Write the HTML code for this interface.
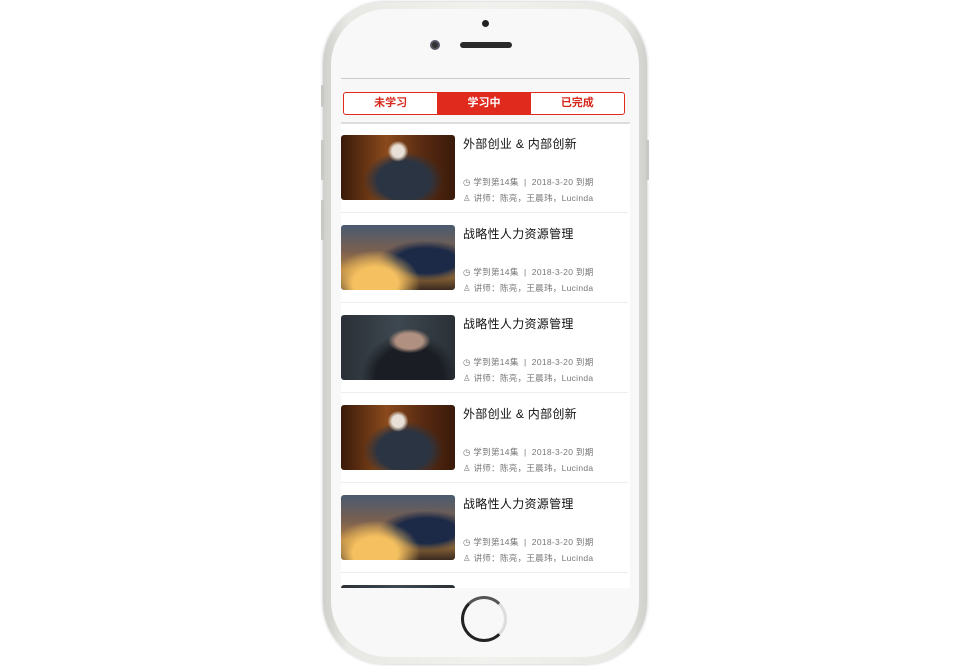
<!DOCTYPE html>
<html><head><meta charset="utf-8"><style>
*{margin:0;padding:0;box-sizing:border-box}
body{width:970px;height:666px;background:#fff;position:relative;overflow:hidden;font-family:"Liberation Sans","Noto Sans CJK SC",sans-serif}
.phone{position:absolute;left:323px;top:2px;width:324px;height:662px;border-radius:62px;background:linear-gradient(90deg,#cfcfcb,#e8e8e4 8%,#f1f1ee 50%,#e8e8e4 92%,#cfcfcb);box-shadow:0 0 3px rgba(0,0,0,.25)}
.inner{position:absolute;left:8px;top:7px;width:308px;height:648px;border-radius:56px;background:#f8f8f8}
.btn{position:absolute;width:3px;background:#c8c8c4;border-radius:1px}
.screen{position:absolute;left:341px;top:78px;width:289px;height:510px;background:#fff;overflow:hidden}
.cam{position:absolute;left:430px;top:40px;width:10px;height:10px;border-radius:50%;background:#333;border:2px solid #556}
.dot{position:absolute;left:482px;top:20px;width:7px;height:7px;border-radius:50%;background:#222}
.spk{position:absolute;left:460px;top:42px;width:52px;height:6px;border-radius:3px;background:#2a2a2a}
.home{position:absolute;left:461px;top:596px;width:46px;height:46px;border-radius:50%;border:3px solid #222;border-right-color:#ddd;border-top-color:#555}
.topbar{position:absolute;left:0;top:0;width:289px;height:46px;background:#f7f7f7;border-top:1px solid #ccc;border-bottom:2px solid #ddd}
.tabs{position:absolute;left:2px;top:13px;width:282px;height:23px;border:1px solid #e02a1e;border-radius:3px;display:flex;background:#fff}
.tabs div{flex:1;text-align:center;font-size:11px;font-weight:bold;color:#d8281c;line-height:21px}
.tabs .on{background:#e02a1e;color:#fff}
.item{position:absolute;left:0;width:289px;height:90px}
.item::after{content:"";position:absolute;left:0;right:2px;top:77px;height:1px;background:#eee}
.img{position:absolute;left:0;top:0;width:114px;height:65px;border-radius:3px}
.t{position:absolute;left:122px;top:0px;font-size:12px;color:#111;letter-spacing:.3px}
.m{position:absolute;left:122px;font-size:8.5px;color:#777;white-space:nowrap;letter-spacing:.3px}
.m1{top:41px}.m2{top:57px}
.man{background:radial-gradient(circle at 50% 25%,#e8e0d6 0 8%,transparent 14%),radial-gradient(ellipse at 55% 70%,#2b3442 0 30%,transparent 45%),linear-gradient(90deg,#3a1a0a,#8a4a1c 40%,#5a2c12 70%,#3a1a0a)}
.chess{background:radial-gradient(ellipse at 30% 90%,#f4c060 0 20%,transparent 40%),radial-gradient(ellipse at 75% 55%,#1c2a48 0 25%,transparent 40%),linear-gradient(180deg,#4a5a70,#7a6050 40%,#b08040 70%,#3a2a20)}
.port{background:radial-gradient(ellipse at 60% 40%,#b09080 0 14%,transparent 22%),radial-gradient(ellipse at 60% 95%,#1a1e24 0 35%,transparent 50%),linear-gradient(90deg,#2a3036,#3e4850 50%,#2a3036)}
</style></head><body>
<div class="phone"><div class="inner"></div></div>
<div class="btn" style="left:321px;top:85px;height:22px"></div>
<div class="btn" style="left:321px;top:140px;height:40px"></div>
<div class="btn" style="left:321px;top:200px;height:40px"></div>
<div class="btn" style="left:646px;top:140px;height:40px"></div>
<div class="dot"></div><div class="cam"></div><div class="spk"></div>
<div class="home"></div>
<div class="screen">
<div class="topbar"><div class="tabs"><div>未学习</div><div class="on">学习中</div><div>已完成</div></div></div>
<div class="item" style="top:57px"><div class="img man"></div><div class="t">外部创业 &amp; 内部创新</div><div class="m m1">◷ 学到第14集 &nbsp;|&nbsp; 2018-3-20 到期</div><div class="m m2">♙ 讲师：陈亮，王晨玮，Lucinda</div></div>
<div class="item" style="top:147px"><div class="img chess"></div><div class="t">战略性人力资源管理</div><div class="m m1">◷ 学到第14集 &nbsp;|&nbsp; 2018-3-20 到期</div><div class="m m2">♙ 讲师：陈亮，王晨玮，Lucinda</div></div>
<div class="item" style="top:237px"><div class="img port"></div><div class="t">战略性人力资源管理</div><div class="m m1">◷ 学到第14集 &nbsp;|&nbsp; 2018-3-20 到期</div><div class="m m2">♙ 讲师：陈亮，王晨玮，Lucinda</div></div>
<div class="item" style="top:327px"><div class="img man"></div><div class="t">外部创业 &amp; 内部创新</div><div class="m m1">◷ 学到第14集 &nbsp;|&nbsp; 2018-3-20 到期</div><div class="m m2">♙ 讲师：陈亮，王晨玮，Lucinda</div></div>
<div class="item" style="top:417px"><div class="img chess"></div><div class="t">战略性人力资源管理</div><div class="m m1">◷ 学到第14集 &nbsp;|&nbsp; 2018-3-20 到期</div><div class="m m2">♙ 讲师：陈亮，王晨玮，Lucinda</div></div>
<div class="item" style="top:507px"><div class="img port"></div></div>
</div>
</body></html>
